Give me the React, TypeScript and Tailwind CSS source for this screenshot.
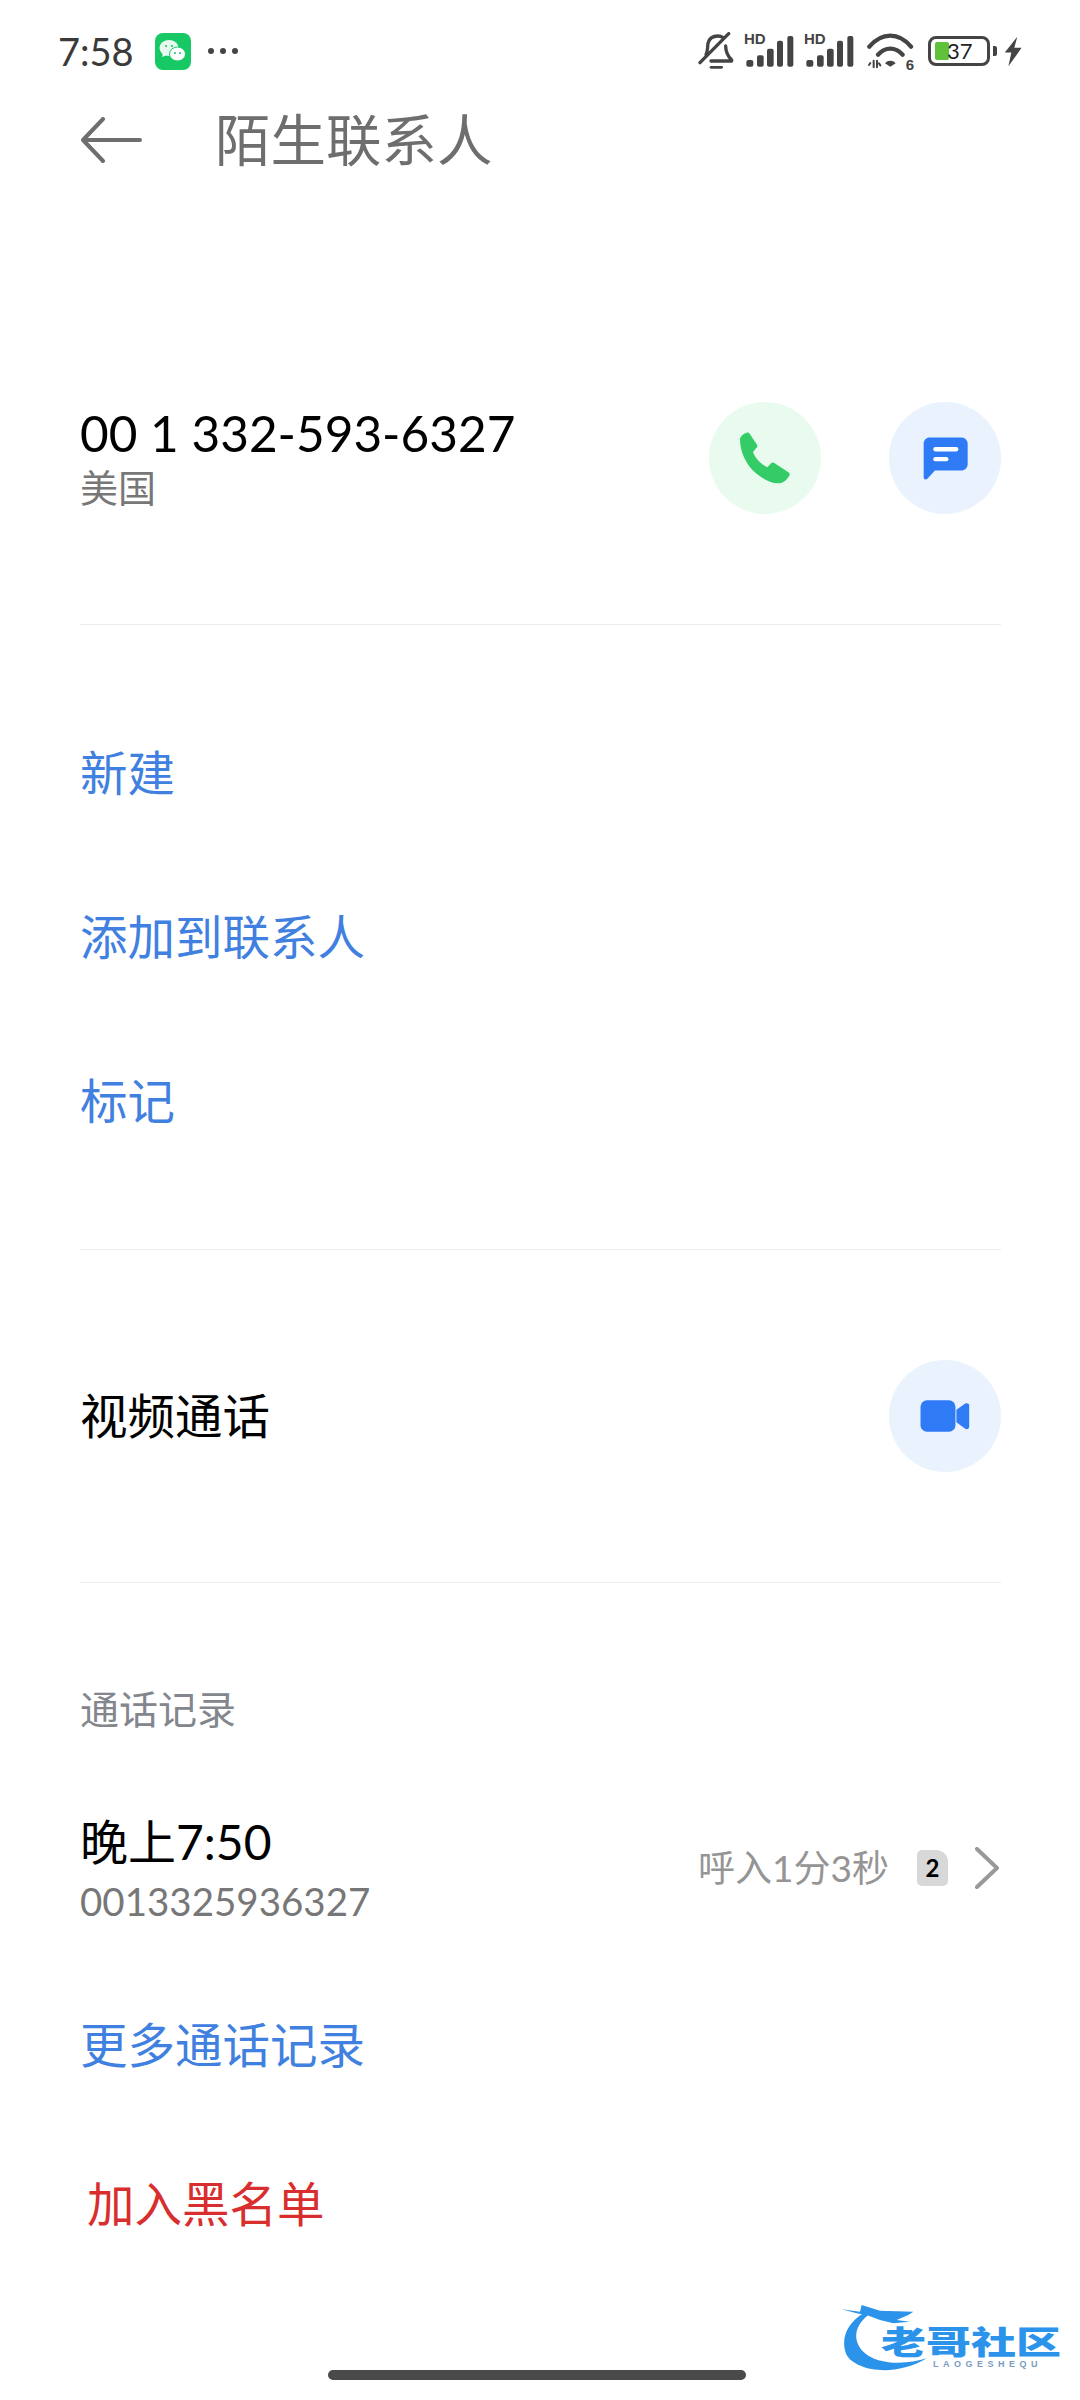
const cjk = "font-['Lato','Noto_Sans_CJK_SC',sans-serif]";

function WeChatIcon() {
  return (
    <svg width="36" height="37" viewBox="0 0 36 37">
      <rect width="36" height="37" rx="8" fill="#16c964" />
      <ellipse cx="14" cy="15" rx="9.500" ry="8" fill="#fff" fillOpacity="0.9" />
      <path d="M8 20l-1 4 5-2z" fill="#fff" fillOpacity="0.9" />
      <ellipse cx="22.500" cy="21" rx="8" ry="7" fill="#fff" stroke="#16c964" strokeWidth="1" />
      <circle cx="11" cy="13" r="1.100" fill="#16c964" />
      <circle cx="17" cy="13" r="1.100" fill="#16c964" />
      <circle cx="20" cy="20" r="1" fill="#16c964" />
      <circle cx="25" cy="20" r="1" fill="#16c964" />
    </svg>
  );
}

function BellOff() {
  return (
    <svg width="36" height="38" viewBox="113 102 108 114" fill="none" stroke="#444" strokeWidth="10" strokeLinecap="round" strokeLinejoin="round">
      <path d="M137 170c6-10 4-22 6-34 3-14 14-22 30-22 6 0 10 1 14 4" />
      <path d="M196 144c0 18 6 30 18 42v3h-62" />
      <path d="M119 194L205 107" />
      <path d="M152 208h32" strokeWidth="8" />
    </svg>
  );
}

function Signal() {
  return (
    <div className="relative w-[49px] h-[34px]">
      <span className="absolute left-[-1px] top-[-3px] text-[15px] leading-[15px] font-bold text-[#444] font-['Liberation_Sans',sans-serif]">HD</span>
      <svg className="absolute left-0 top-0" width="49" height="34" viewBox="255 106 147 102" fill="#444">
        <rect x="259" y="184" width="21" height="20" rx="6" />
        <rect x="291" y="170" width="20" height="34" rx="6" />
        <rect x="321" y="150" width="20" height="54" rx="6" />
        <rect x="351" y="126" width="18" height="78" rx="6" />
        <rect x="382" y="112" width="18" height="92" rx="6" />
      </svg>
    </div>
  );
}

function Wifi() {
  return (
    <div className="relative w-[47px] h-[36px]">
      <svg width="47" height="36" viewBox="620 105 141 108" fill="none" stroke="#444" strokeWidth="13" strokeLinecap="round">
        <path d="M627 146C665 102 715 102 752 146" />
        <path d="M653 170c22-24 52-24 74 0" />
        <path d="M674 196c8-10 24-10 32 0l-16 10z" fill="#444" stroke="none" />
        <path d="M630 195l-4 6M640 188v20M650 188v20M660 202l-4-6" strokeWidth="6" />
      </svg>
      <span className="absolute right-0 bottom-[-3px] text-[15px] leading-[15px] font-bold text-[#444] font-['Liberation_Sans',sans-serif]">6</span>
    </div>
  );
}

function Battery() {
  return (
    <div className="flex items-center gap-[3px]">
      <div className="relative w-[62px] h-[30px] rounded-[8px] border-[3px] border-[#444]">
        <div className="absolute left-[4px] top-[3px] bottom-[3px] w-[14px] bg-[#5fc23a] rounded-[2px]" />
        <span className="absolute left-[16px] top-0 text-[22px] leading-[24px] text-[#222] font-['Lato',sans-serif]">37</span>
      </div>
      <div className="w-[4px] h-[10px] bg-[#444] rounded-r-[2px]" />
    </div>
  );
}

function Bolt() {
  return (
    <svg width="18" height="31" viewBox="1032 108 54 94" fill="#444">
      <path d="M1072 110L1034 158h20l-9 42 40-56h-22z" />
    </svg>
  );
}

function StatusBar() {
  return (
    <div className="h-[100px] pt-[32px] pl-[58px] pr-[58px] flex items-start justify-between">
      <div className="flex items-center">
        <span className="text-[38px] leading-[38px] text-[#3a3a3a] font-['Lato',sans-serif] w-[75px]">7:58</span>
        <div className="ml-[22px]">
          <WeChatIcon />
        </div>
        <div className="flex gap-[6px] ml-[17px]">
          <div className="w-[6px] h-[6px] rounded-full bg-[#444]" />
          <div className="w-[6px] h-[6px] rounded-full bg-[#444]" />
          <div className="w-[6px] h-[6px] rounded-full bg-[#444]" />
        </div>
      </div>
      <div className="flex items-center gap-[11px]">
        <BellOff />
        <Signal />
        <Signal />
        <div className="ml-[2px]">
          <Wifi />
        </div>
        <div className="ml-[3px]">
          <Battery />
        </div>
        <div className="ml-[-4px]">
          <Bolt />
        </div>
      </div>
    </div>
  );
}

function CircleButton({ bg, children }: { bg: string; children: React.ReactNode }) {
  return <div className={`w-[112px] h-[112px] rounded-full flex items-center justify-center ${bg}`}>{children}</div>;
}

function PhoneIcon() {
  return (
    <svg width="52" height="52" viewBox="243 153 156 156">
      <path
        d="M246 175c0-8 10-17 20-20 5-1 8 1 10 5l20 30c3 5 3 8-2 12l-9 11c6 18 23 36 43 46l10-11c4-4 7-4 12-1l40 26c7 5 6 8 2 14-7 11-18 20-32 20-22 0-44-12-66-30-30-25-48-65-48-102z"
        fill="#33cc66"
      />
    </svg>
  );
}

function MessageIcon() {
  return (
    <svg width="45" height="43" viewBox="786 168 136 129">
      <path d="M806 169h96c10 0 19 8 19 19v62c0 10-9 19-19 19h-80l-22 24c-5 5-12 3-12-4V188c0-11 8-19 18-19z" fill="#2f7bf5" />
      <rect x="817" y="198" width="76" height="13" rx="6.500" fill="#fff" />
      <rect x="817" y="228" width="46" height="13" rx="6.500" fill="#fff" />
    </svg>
  );
}

function VideoIcon() {
  return (
    <svg width="50" height="32" viewBox="786 176 152 98">
      <rect x="787" y="177" width="107" height="96" rx="20" fill="#2f7bf5" />
      <path d="M897 206l27-19c5-3 12-1 12 6v65c0 7-7 9-12 6l-27-20z" fill="#2f7bf5" />
    </svg>
  );
}

function ActionRow({ label }: { label: string }) {
  return <div className="h-[164px] flex items-center text-[47.500px] text-[#3f80e0]">{label}</div>;
}

function Watermark() {
  return (
    <div className="absolute left-[830px] top-[2300px] w-[240px] h-[75px]">
      <svg className="absolute left-0 top-0" width="130" height="75" viewBox="150 60 390 225" fill="#2b93ea">
        <path d="M250 100C200 130 180 180 200 225C225 270 340 295 440 235C380 255 290 255 250 215C215 180 225 135 265 105Z" />
        <path d="M185 88L240 95L245 75L300 92L400 95L385 105L350 120L390 125L340 130L300 120L260 105L230 100Z" />
      </svg>
      <span className="absolute left-[51px] top-[26px] w-[184px] scale-y-[0.72] origin-center text-[45px] leading-[32px] font-black text-[#2b93ea] whitespace-nowrap">老哥社区</span>
      <span className="absolute left-[103px] top-[60px] text-[9px] leading-[9px] tracking-[4.500px] font-bold text-[#7a9cc0] font-['Liberation_Sans',sans-serif]">LAOGESHEQU</span>
    </div>
  );
}

export default function App() {
  return (
    <div className={`relative w-[1080px] h-[2400px] overflow-hidden bg-white ${cjk}`}>
      <StatusBar />

      <div className="h-[80px] pl-[80px] flex items-center">
        <svg width="62" height="46" viewBox="0 0 62 46" fill="none" stroke="#6e6e6e" strokeWidth="4" strokeLinecap="round" strokeLinejoin="round">
          <path d="M60 23H3M23 2L3 23l20 21" />
        </svg>
        <span className="ml-[73px] text-[55.500px] text-[#6e6e6e] leading-[80px]">陌生联系人</span>
      </div>

      <div className="ml-[80px] mr-[79px] pt-[222px]">
        <div className="h-[112px] flex items-center justify-between">
          <div className="flex flex-col">
            <span className="text-[49.500px] leading-[58px] text-black">00 1 332-593-6327</span>
            <span className="text-[38px] leading-[50px] text-[#777]">美国</span>
          </div>
          <div className="flex gap-[68px]">
            <CircleButton bg="bg-[#e9faef]"><PhoneIcon /></CircleButton>
            <CircleButton bg="bg-[#e9f2fd]"><MessageIcon /></CircleButton>
          </div>
        </div>
      </div>

      <div className="ml-[80px] mr-[79px] mt-[110px] h-px bg-[#ececec]" />

      <div className="mx-[80px] pt-[66px] pb-[66px]">
        <ActionRow label="新建" />
        <ActionRow label="添加到联系人" />
        <ActionRow label="标记" />
      </div>

      <div className="ml-[80px] mr-[79px] h-px bg-[#ececec]" />

      <div className="ml-[80px] mr-[79px] pt-[110px] pb-[110px] flex items-center justify-between">
        <span className="text-[47.500px] text-black">视频通话</span>
        <CircleButton bg="bg-[#e9f2fd]"><VideoIcon /></CircleButton>
      </div>

      <div className="ml-[80px] mr-[79px] h-px bg-[#ececec]" />

      <div className="mx-[80px] pt-[96px]">
        <div className="h-[60px] flex items-center text-[39px] text-[#83868c]">通话记录</div>
        <div className="mt-[72px] h-[120px] flex items-center justify-between">
          <div className="flex flex-col">
            <span className="text-[48px] leading-[60px] text-black">晚上7:50</span>
            <span className="text-[38.500px] leading-[58px] text-[#777]">0013325936327</span>
          </div>
          <div className="flex items-center mt-[-6px]">
            <span className="text-[37px] text-[#959595]">呼入1分3秒</span>
            <div className="ml-[28px] w-[31px] h-[36px] rounded-[5px] rounded-tr-[12px] bg-[#d8d8d8] flex items-center justify-center text-[24px] font-bold text-black">2</div>
            <svg className="ml-[26px]" width="26" height="42" viewBox="0 0 26 42" fill="none" stroke="#999" strokeWidth="4" strokeLinecap="round" strokeLinejoin="round">
              <path d="M3 2l20 19L3 40" />
            </svg>
          </div>
        </div>
        <div className="mt-[64px] h-[100px] flex items-center text-[47.500px] text-[#3f80e0]">更多通话记录</div>
        <div className="mt-[59px] h-[100px] flex items-center pl-[7px] text-[47.500px] text-[#d92e2e]">加入黑名单</div>
      </div>

      <div className="mt-[116px] ml-[328px] w-[418px] h-[10px] rounded-full bg-[#4a4a4a]" />

      <Watermark />
    </div>
  );
}
